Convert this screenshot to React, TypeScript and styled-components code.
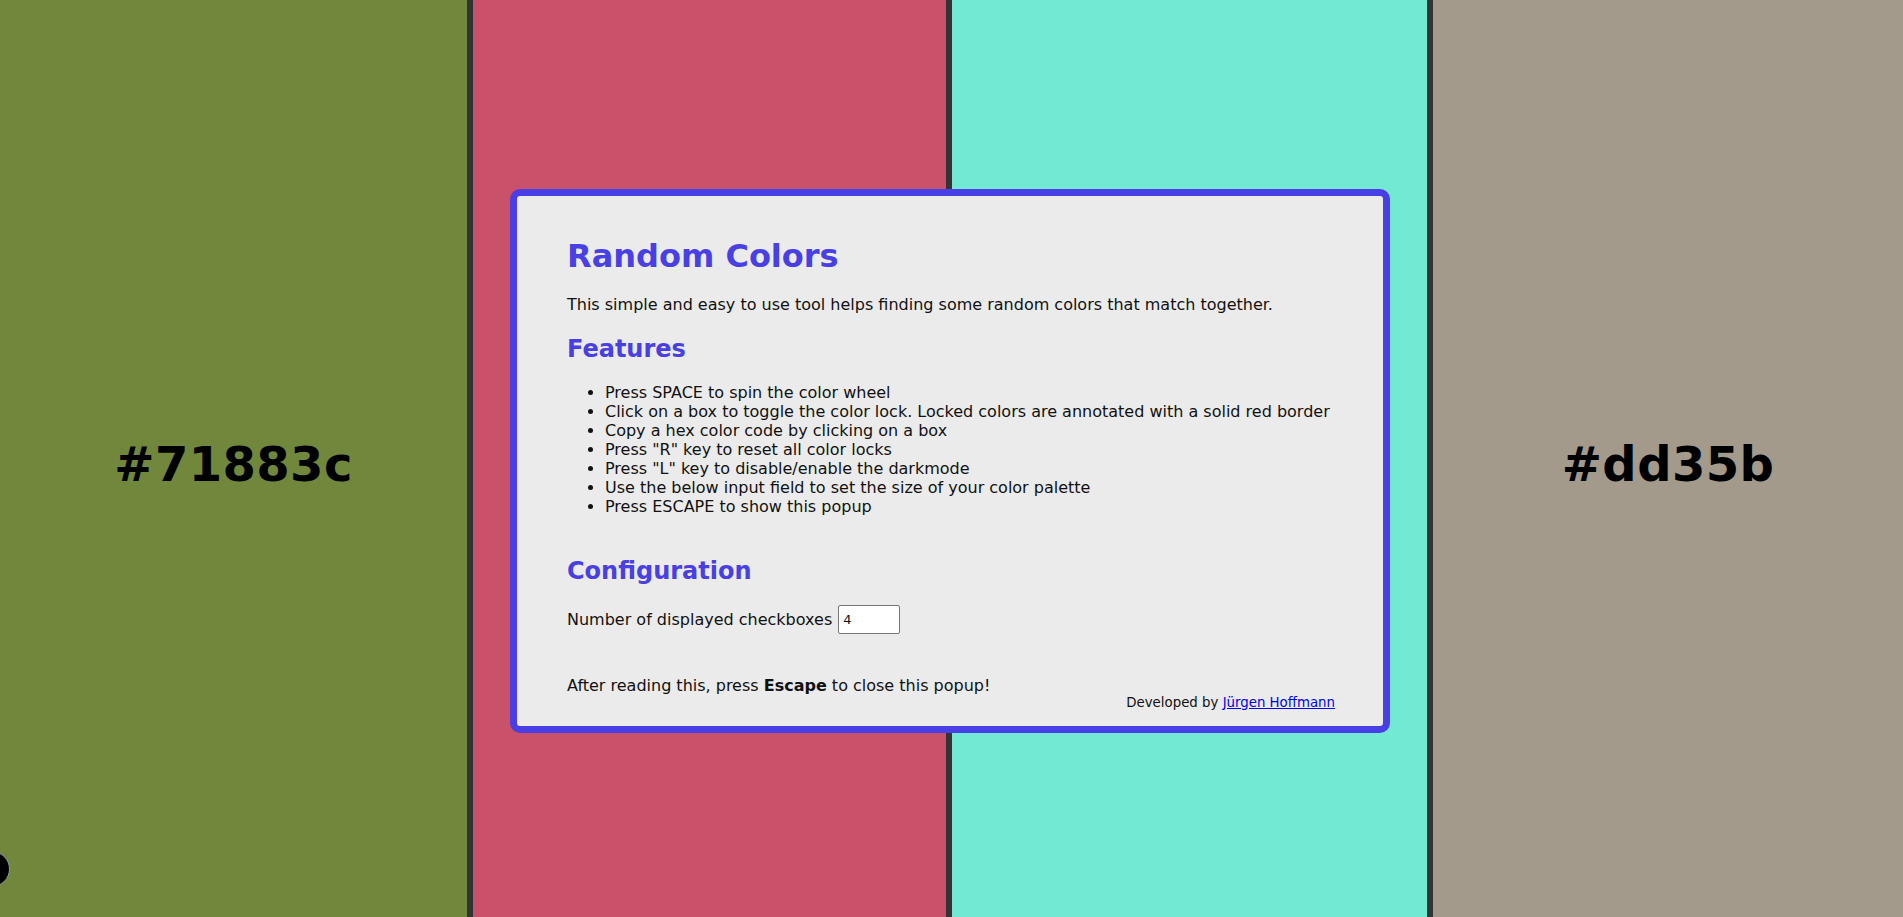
import React from "react";
import styled, { createGlobalStyle } from "styled-components";

const Global = createGlobalStyle`
  html, body { margin: 0; padding: 0; overflow: hidden; }
  body { font-family: "DejaVu Sans", Verdana, sans-serif; color: #111; }
`;

const Palette = styled.div`
  display: grid;
  grid-template-columns: 467px 473px 475px 1fr;
  column-gap: 6px;
  background: #333333;
  height: 100vh;
`;

const Swatch = styled.div<{ $bg: string }>`
  background: ${(p) => p.$bg};
  display: flex;
  align-items: center;
  justify-content: center;
  padding-top: 11px;
  box-sizing: border-box;
`;

const HexLabel = styled.span`
  font-size: 48px;
  font-weight: bold;
  letter-spacing: 0.4px;
  color: #000;
`;

const ModeToggle = styled.div`
  position: fixed;
  left: -26px;
  top: 851px;
  width: 34px;
  height: 34px;
  border-radius: 50%;
  background: #000;
  border: 1px solid #8a9aa6;
`;

const Overlay = styled.div`
  position: fixed;
  inset: 0;
  display: flex;
  align-items: center;
  justify-content: center;
  padding: 4px 3px 0 0;
  box-sizing: border-box;
`;

const Popup = styled.div`
  width: 880px;
  box-sizing: border-box;
  border: 7px solid #4840e6;
  border-radius: 10px;
  background: #ebebeb;
  padding: 42px 48px 16px 50px;
`;

const Title = styled.h1`
  margin: 0;
  font-size: 32px;
  line-height: 37px;
  color: #4840e6;
  font-weight: bold;
`;

const Intro = styled.p`
  margin: 20px 0 0;
  font-size: 16px;
  line-height: 19px;
`;

const Heading = styled.h2<{ $gap: number }>`
  margin: ${(p) => p.$gap}px 0 0;
  font-size: 24px;
  line-height: 28px;
  color: #4840e6;
  font-weight: bold;
`;

const FeatureList = styled.ul`
  margin: 20px 0 0;
  padding-left: 38px;
  font-size: 16px;
  line-height: 19px;
`;

const ConfigRow = styled.label`
  display: flex;
  align-items: center;
  gap: 6px;
  margin-top: 20px;
  font-size: 16px;
  line-height: 19px;
`;

const NumberInput = styled.input`
  width: 62px;
  height: 29px;
  box-sizing: border-box;
  border: 1px solid #767676;
  border-radius: 2px;
  background: #fff;
  padding: 0 4px;
  font-family: "DejaVu Sans", sans-serif;
  font-size: 13px;
  color: #111;
`;

const Closing = styled.p`
  margin: 42px 0 0;
  font-size: 16px;
  line-height: 19px;
`;

const Credit = styled.div`
  text-align: right;
  font-size: 13.33px;
  line-height: 15px;
  a { color: #0000ee; }
`;

const colors = [
  { bg: "#71883c", label: "#71883c" },
  { bg: "#c9516a", label: "#c9516a" },
  { bg: "#72e9d2", label: "#72e9d2" },
  { bg: "#a39a8c", label: "#dd35b" },
];

const features = [
  "Press SPACE to spin the color wheel",
  "Click on a box to toggle the color lock. Locked colors are annotated with a solid red border",
  "Copy a hex color code by clicking on a box",
  'Press "R" key to reset all color locks',
  'Press "L" key to disable/enable the darkmode',
  "Use the below input field to set the size of your color palette",
  "Press ESCAPE to show this popup",
];

export default function App() {
  return (
    <>
      <Global />
      <Palette>
        {colors.map((c) => (
          <Swatch key={c.bg} $bg={c.bg}>
            <HexLabel>{c.label}</HexLabel>
          </Swatch>
        ))}
      </Palette>
      <ModeToggle />
      <Overlay>
        <Popup>
          <Title>Random Colors</Title>
          <Intro>
            This simple and easy to use tool helps finding some random colors that match together.
          </Intro>
          <Heading $gap={21}>Features</Heading>
          <FeatureList>
            {features.map((f) => (
              <li key={f}>{f}</li>
            ))}
          </FeatureList>
          <Heading $gap={41}>Configuration</Heading>
          <ConfigRow>
            Number of displayed checkboxes
            <NumberInput type="number" defaultValue={4} />
          </ConfigRow>
          <Closing>
            After reading this, press <b>Escape</b> to close this popup!
          </Closing>
          <Credit>
            Developed by <a href="#">Jürgen Hoffmann</a>
          </Credit>
        </Popup>
      </Overlay>
    </>
  );
}
